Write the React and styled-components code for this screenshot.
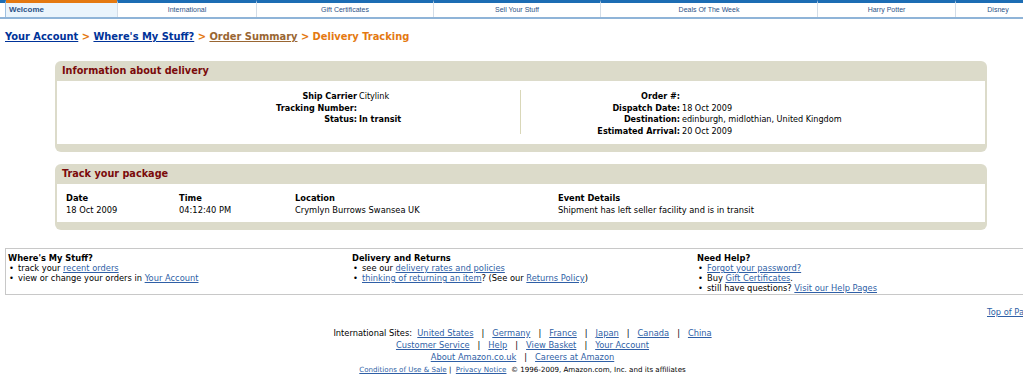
import React from 'react';
import styled, { createGlobalStyle } from 'styled-components';

const GlobalStyle = createGlobalStyle`
  html, body {
    margin: 0;
    padding: 0;
    background: #ffffff;
    overflow: hidden;
  }
  body {
    font-family: "DejaVu Sans", Verdana, sans-serif;
    color: #000;
  }
`;

const Page = styled.div`
  width: 1045px;
  padding-bottom: 20px;
`;

const NavBar = styled.div`
  display: flex;
  border-bottom: 2px solid #8fb4d8;
  height: 17px;
`;

const NavEdge = styled.div`
  width: 5px;
  border-top: 3px solid #1d6db4;
  border-right: 1px solid #9ec0e0;
`;

const Tab = styled.div`
  width: ${p => p.w}px;
  flex: none;
  box-sizing: border-box;
  border-top: 3px solid ${p => (p.active ? '#e47911' : '#1d6db4')};
  border-left: ${p => (p.first ? 'none' : '1px solid #d3dde8')};
  background: ${p => (p.active ? '#eaf4fc' : '#ffffff')};
  color: #2b5287;
  font-family: "Liberation Sans", Arial, sans-serif;
  font-size: ${p => (p.active ? '8px' : '7px')};
  font-weight: ${p => (p.active ? 'bold' : 'normal')};
  text-align: ${p => (p.active ? 'left' : 'center')};
  padding-left: ${p => (p.active ? '3px' : '0')};
  line-height: 14px;
  white-space: nowrap;
`;

const Crumbs = styled.div`
  margin: 12px 0 0 5px;
  font-size: 9.9px;
  font-weight: bold;
  color: #e47911;
`;

const CrumbLink = styled.a`
  color: ${p => (p.muted ? '#996633' : '#003399')};
  text-decoration: underline;
`;

const Box = styled.div`
  margin: ${p => p.top}px 0 0 55px;
  width: 932px;
  background: #dcdbca;
  border-radius: 6px;
  padding: 0 2px 8px 2px;
  box-sizing: border-box;
`;

const BoxTitle = styled.div`
  height: 20px;
  line-height: 19px;
  padding-left: 5px;
  font-size: 9.7px;
  font-weight: bold;
  color: #7a0a0a;
`;

const InfoBody = styled.div`
  background: #fff;
  height: 63px;
  display: grid;
  grid-template-columns: 463px 1fr;
  padding-top: 9px;
  box-sizing: border-box;
`;

const InfoCol = styled.div`
  display: grid;
  grid-template-columns: ${p => p.label}px 1fr;
  align-content: start;
  column-gap: 2px;
  height: 44px;
  padding-top: 1px;
  box-sizing: border-box;
  border-left: ${p => (p.divided ? '1px solid #d9d7b8' : 'none')};
  font-size: 8.1px;
  line-height: 11.5px;
`;

const Label = styled.div`
  text-align: right;
  font-weight: bold;
  white-space: nowrap;
`;

const Value = styled.div`
  font-weight: ${p => (p.strong ? 'bold' : 'normal')};
  white-space: nowrap;
`;

const TrackBody = styled.div`
  background: #fff;
  height: 38px;
  padding: 8px 0 0 9px;
  box-sizing: border-box;
  display: grid;
  grid-template-columns: 113px 116px 263px 1fr;
  align-content: start;
  font-size: 8.3px;
  line-height: 12px;
`;

const Th = styled.div`
  font-weight: bold;
`;

const HelpBox = styled.div`
  margin: 18px 0 0 5px;
  border: 1px solid #c8c8c8;
  border-right: none;
  height: 47px;
  display: grid;
  grid-template-columns: 344px 345px 1fr;
  padding: 4px 0 0 2px;
  box-sizing: border-box;
  font-size: 8.3px;
  line-height: 10px;
`;

const HelpTitle = styled.div`
  font-weight: bold;
`;

const HelpList = styled.ul`
  margin: 0;
  padding: 0;
  list-style: none;
`;

const HelpItem = styled.li`
  white-space: nowrap;
  &::before {
    content: '•';
    display: inline-block;
    width: 9px;
    padding-left: 1px;
  }
`;

const Link = styled.a`
  color: #2f5fa6;
  text-decoration: underline;
`;

const TopLink = styled.div`
  margin-top: 12px;
  padding-left: 987px;
  font-size: 8.3px;
  line-height: 10px;
  white-space: nowrap;
`;

const Footer = styled.div`
  margin-top: 10px;
  text-align: center;
  font-size: 8.3px;
  line-height: 12px;
  white-space: nowrap;
`;

const Sep = styled.span`
  margin: 0 8px;
`;

const Legal = styled.div`
  font-size: 7.1px;
  line-height: 13px;
`;

const tabs = [
  ['Welcome', 111, true],
  ['International', 139],
  ['Gift Certificates', 177],
  ['Sell Your Stuff', 167],
  ['Deals Of The Week', 217],
  ['Harry Potter', 138],
  ['Disney', 85],
];

const events = [
  ['18 Oct 2009', '04:12:40 PM', 'Crymlyn Burrows Swansea UK', 'Shipment has left seller facility and is in transit'],
];

function joinLinks(items) {
  return items.map((t, i) => (
    <React.Fragment key={t}>
      {i > 0 && <Sep>|</Sep>}
      <Link href="#">{t}</Link>
    </React.Fragment>
  ));
}

export default function App() {
  return (
    <Page>
      <GlobalStyle />
      <NavBar>
        <NavEdge />
        {tabs.map(([name, w, active], i) => (
          <Tab key={name} w={w} active={active} first={i === 0}>{name}</Tab>
        ))}
      </NavBar>

      <Crumbs>
        <CrumbLink href="#">Your Account</CrumbLink> &gt; <CrumbLink href="#">Where's My Stuff?</CrumbLink> &gt;{' '}
        <CrumbLink href="#" muted>Order Summary</CrumbLink> &gt; Delivery Tracking
      </Crumbs>

      <Box top={19}>
        <BoxTitle>Information about delivery</BoxTitle>
        <InfoBody>
          <InfoCol label={300}>
            <Label>Ship Carrier</Label><Value>Citylink</Value>
            <Label>Tracking Number:</Label><Value />
            <Label>Status:</Label><Value strong>In transit</Value>
          </InfoCol>
          <InfoCol label={159} divided>
            <Label>Order #:</Label><Value />
            <Label>Dispatch Date:</Label><Value>18 Oct 2009</Value>
            <Label>Destination:</Label><Value>edinburgh, midlothian, United Kingdom</Value>
            <Label>Estimated Arrival:</Label><Value>20 Oct 2009</Value>
          </InfoCol>
        </InfoBody>
      </Box>

      <Box top={12}>
        <BoxTitle>Track your package</BoxTitle>
        <TrackBody>
          <Th>Date</Th><Th>Time</Th><Th>Location</Th><Th>Event Details</Th>
          {events.map(row => row.map((cell, i) => <div key={i}>{cell}</div>))}
        </TrackBody>
      </Box>

      <HelpBox>
        <div>
          <HelpTitle>Where's My Stuff?</HelpTitle>
          <HelpList>
            <HelpItem>track your <Link href="#">recent orders</Link></HelpItem>
            <HelpItem>view or change your orders in <Link href="#">Your Account</Link></HelpItem>
          </HelpList>
        </div>
        <div>
          <HelpTitle>Delivery and Returns</HelpTitle>
          <HelpList>
            <HelpItem>see our <Link href="#">delivery rates and policies</Link></HelpItem>
            <HelpItem><Link href="#">thinking of returning an item</Link>? (See our <Link href="#">Returns Policy</Link>)</HelpItem>
          </HelpList>
        </div>
        <div>
          <HelpTitle>Need Help?</HelpTitle>
          <HelpList>
            <HelpItem><Link href="#">Forgot your password?</Link></HelpItem>
            <HelpItem>Buy <Link href="#">Gift Certificates</Link>.</HelpItem>
            <HelpItem>still have questions? <Link href="#">Visit our Help Pages</Link></HelpItem>
          </HelpList>
        </div>
      </HelpBox>

      <TopLink><Link href="#">Top of Page</Link></TopLink>

      <Footer>
        <div>International Sites:&nbsp;&nbsp;{joinLinks(['United States', 'Germany', 'France', 'Japan', 'Canada', 'China'])}</div>
        <div>{joinLinks(['Customer Service', 'Help', 'View Basket', 'Your Account'])}</div>
        <div>{joinLinks(['About Amazon.co.uk', 'Careers at Amazon'])}</div>
        <Legal>
          <Link href="#">Conditions of Use &amp; Sale</Link> |&nbsp;&nbsp;<Link href="#">Privacy Notice</Link>&nbsp;&nbsp;© 1996-2009, Amazon.com, Inc. and its affiliates
        </Legal>
      </Footer>
    </Page>
  );
}
